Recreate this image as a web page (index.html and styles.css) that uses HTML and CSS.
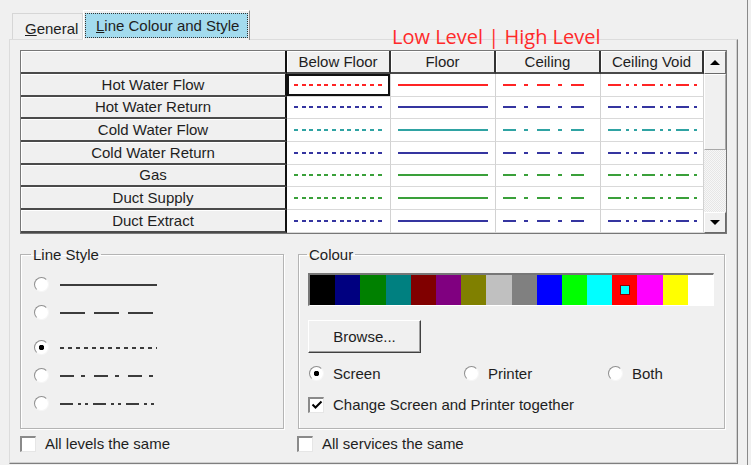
FILE: index.html
```html
<!DOCTYPE html>
<html lang="en">
<head>
    <meta charset="UTF-8">
    <meta name="viewport" content="width=device-width, initial-scale=1.0">
    <title>Line Colour and Style</title>
    <link rel="stylesheet" href="styles.css">
</head>
<body>
    <div class="window">
        <div class="tabs">
            <div class="tab"><u>G</u>eneral</div>
            <div class="tab active"><span class="focus"><u>L</u>ine Colour and Style</span></div>
        </div>

        <div class="panel">
            <div class="grid">
                <div class="hcell corner"></div>
                <div class="hcell">Below Floor</div>
                <div class="hcell">Floor</div>
                <div class="hcell">Ceiling</div>
                <div class="hcell">Ceiling Void</div>

                <div class="row red">
                    <div class="rh">Hot Water Flow</div>
                    <div class="cell sel"><i class="ln dot"></i></div>
                    <div class="cell"><i class="ln solid"></i></div>
                    <div class="cell"><i class="ln dash-dot"></i></div>
                    <div class="cell"><i class="ln dash-dot-dot"></i></div>
                </div>
                <div class="row navy">
                    <div class="rh">Hot Water Return</div>
                    <div class="cell"><i class="ln dot"></i></div>
                    <div class="cell"><i class="ln solid"></i></div>
                    <div class="cell"><i class="ln dash-dot"></i></div>
                    <div class="cell"><i class="ln dash-dot-dot"></i></div>
                </div>
                <div class="row teal">
                    <div class="rh">Cold Water Flow</div>
                    <div class="cell"><i class="ln dot"></i></div>
                    <div class="cell"><i class="ln solid"></i></div>
                    <div class="cell"><i class="ln dash-dot"></i></div>
                    <div class="cell"><i class="ln dash-dot-dot"></i></div>
                </div>
                <div class="row navy">
                    <div class="rh">Cold Water Return</div>
                    <div class="cell"><i class="ln dot"></i></div>
                    <div class="cell"><i class="ln solid"></i></div>
                    <div class="cell"><i class="ln dash-dot"></i></div>
                    <div class="cell"><i class="ln dash-dot-dot"></i></div>
                </div>
                <div class="row green">
                    <div class="rh">Gas</div>
                    <div class="cell"><i class="ln dot"></i></div>
                    <div class="cell"><i class="ln solid"></i></div>
                    <div class="cell"><i class="ln dash-dot"></i></div>
                    <div class="cell"><i class="ln dash-dot-dot"></i></div>
                </div>
                <div class="row green">
                    <div class="rh">Duct Supply</div>
                    <div class="cell"><i class="ln dot"></i></div>
                    <div class="cell"><i class="ln solid"></i></div>
                    <div class="cell"><i class="ln dash-dot"></i></div>
                    <div class="cell"><i class="ln dash-dot-dot"></i></div>
                </div>
                <div class="row navy">
                    <div class="rh">Duct Extract</div>
                    <div class="cell"><i class="ln dot"></i></div>
                    <div class="cell"><i class="ln solid"></i></div>
                    <div class="cell"><i class="ln dash-dot"></i></div>
                    <div class="cell"><i class="ln dash-dot-dot"></i></div>
                </div>

                <div class="scroll">
                    <div class="sbtn"><span class="arrow up"></span></div>
                    <div class="thumb"></div>
                    <div class="track"></div>
                    <div class="sbtn down"><span class="arrow dn"></span></div>
                </div>
            </div>

            <div class="groups">
                <fieldset class="box line-style">
                    <legend>Line Style</legend>
                    <div class="box-body">
                        <div class="opt"><span class="radio"></span><i class="sample s-solid"></i></div>
                        <div class="opt"><span class="radio"></span><i class="sample s-dash"></i></div>
                        <div class="opt spaced"><span class="radio on"></span><i class="sample s-dot"></i></div>
                        <div class="opt"><span class="radio"></span><i class="sample s-dash-dot"></i></div>
                        <div class="opt"><span class="radio"></span><i class="sample s-dash-dot-dot"></i></div>
                    </div>
                </fieldset>

                <fieldset class="box colour">
                    <legend>Colour</legend>
                    <div class="box-body">
                        <div class="palette">
                            <span style="background:#000000"></span>
                            <span style="background:#000080"></span>
                            <span style="background:#008000"></span>
                            <span style="background:#008080"></span>
                            <span style="background:#800000"></span>
                            <span style="background:#800080"></span>
                            <span style="background:#808000"></span>
                            <span style="background:#c0c0c0"></span>
                            <span style="background:#808080"></span>
                            <span style="background:#0000ff"></span>
                            <span style="background:#00ff00"></span>
                            <span style="background:#00ffff"></span>
                            <span style="background:#ff0000"><b class="picked"></b></span>
                            <span style="background:#ff00ff"></span>
                            <span style="background:#ffff00"></span>
                            <span style="background:#ffffff"></span>
                        </div>
                        <button class="btn">Browse...</button>
                        <div class="radios">
                            <label class="choice"><span class="radio on"></span>Screen</label>
                            <label class="choice"><span class="radio"></span>Printer</label>
                            <label class="choice"><span class="radio"></span>Both</label>
                        </div>
                        <label class="choice check-row">
                            <span class="check"><svg width="12" height="12" viewBox="0 0 12 12"><polyline points="1.5,5.5 4.5,8.5 10.5,2.5" fill="none" stroke="#000" stroke-width="2"/></svg></span>
                            Change Screen and Printer together
                        </label>
                    </div>
                </fieldset>
            </div>

            <div class="footer">
                <label class="choice levels"><span class="check"></span>All levels the same</label>
                <label class="choice"><span class="check"></span>All services the same</label>
            </div>
        </div>

        <div class="note">Low Level | High Level</div>
    </div>
</body>
</html>
```

FILE: styles.css
```css
* {
    box-sizing: border-box;
}
body {
    margin: 0;
    background: #f0f0f0;
    font-family: "Liberation Sans", Arial, sans-serif;
    font-size: 15px;
    color: #1e1e1e;
}
.window {
    position: relative;
    width: 748px;
    height: 465px;
    border-right: 1px solid #8a8a8a;
    overflow: hidden;
}

/* tabs */
.tabs {
    display: flex;
    align-items: flex-end;
    height: 39px;
    padding-left: 12px;
}
.tab {
    width: 71px;
    height: 26px;
    padding: 3px 0 0 12px;
    display: flex;
    align-items: center;
    border: 1px solid #d6d6d6;
    border-bottom: none;
}
.tab.active {
    position: relative;
    z-index: 1;
    width: 167px;
    height: 30px;
    margin-bottom: -1px;
    padding: 1px;
    border-color: #fff #8a8a8a #f0f0f0 #fff;
    background: #f0f0f0;
}
.focus {
    display: flex;
    align-items: center;
    width: 100%;
    height: 25px;
    padding-left: 10px;
    background: #a3dbee;
    border: 1px dotted #333;
}

/* panel */
.panel {
    width: 729px;
    height: 425px;
    margin-left: 9px;
    padding: 10px 10px 0 10px;
    border: 1px solid;
    border-color: #dcdcdc #7f7f7f #7f7f7f #dcdcdc;
    box-shadow: inset -1px -1px #cfcfcf;
}

/* grid */
.grid {
    display: grid;
    grid-template-columns: 266px 104px 105px 105px 103px 22px;
    grid-template-rows: 23px repeat(7, 22.67px);
    width: max-content;
    border: 1px solid #777;
}
.row {
    display: contents;
}
.hcell, .rh {
    display: flex;
    align-items: center;
    justify-content: center;
    background: #f0f0f0;
    color: #1e1e1e;
    box-shadow: inset 1px 1px #fff;
    border-bottom: 2px solid #4a4a4a;
    border-right: 2px solid #333;
    white-space: nowrap;
}
.hcell.corner, .rh {
    border-right-color: #111;
}
.cell {
    display: flex;
    align-items: center;
    padding-left: 7px;
    background: #fff;
    border-right: 1px solid #d2d2d2;
    border-bottom: 1px solid #d9d9d9;
}
.cell.sel {
    box-shadow: inset 0 0 0 2px #111;
}
.red { color: #ff2424; }
.navy { color: #3535a0; }
.teal { color: #2fa3a3; }
.green { color: #3aa03a; }

.ln {
    display: block;
    height: 2px;
}
.ln.dot {
    width: 90px;
    background: repeating-linear-gradient(90deg, currentColor 0 4px, transparent 4px 7.6px);
}
.ln.solid {
    width: 90px;
    background: currentColor;
}
.ln.dash-dot {
    width: 81px;
    background: repeating-linear-gradient(90deg, currentColor 0 13px, transparent 13px 21px, currentColor 21px 25px, transparent 25px 34px);
}
.ln.dash-dot-dot {
    width: 89px;
    background: repeating-linear-gradient(90deg, currentColor 0 13px, transparent 13px 18px, currentColor 18px 21px, transparent 21px 26px, currentColor 26px 29px, transparent 29px 34px);
}

/* scrollbar */
.scroll {
    grid-column: 6;
    grid-row: 1 / span 8;
    display: flex;
    flex-direction: column;
}
.sbtn {
    height: 23px;
    display: flex;
    align-items: center;
    justify-content: center;
    background: #f0f0f0;
    border: 1px solid;
    border-color: #fff #6a6a6a #6a6a6a #fff;
}
.sbtn.down {
    height: 21px;
}
.thumb {
    height: 76px;
    background: #f0f0f0;
    border: 1px solid;
    border-color: #fff #a8a8a8 #a8a8a8 #fff;
}
.track {
    flex: 1;
    background: repeating-conic-gradient(#f7f7f7 0 25%, #e6e6e6 0 50%) 0 0 / 2px 2px;
}
.arrow {
    width: 0;
    height: 0;
    border-left: 5px solid transparent;
    border-right: 5px solid transparent;
}
.arrow.up {
    border-bottom: 5px solid #000;
}
.arrow.dn {
    border-top: 5px solid #000;
}

/* group boxes */
.groups {
    display: flex;
    gap: 14px;
    margin-top: 12px;
}
.box {
    margin: 0;
    padding: 0;
    height: 183px;
    border: 1px solid #b4b4b4;
    box-shadow: inset 1px 1px #fff, 1px 1px #fff;
}
.box legend {
    padding: 0 2px;
    line-height: 17px;
}
.line-style {
    width: 264px;
}
.line-style legend {
    margin-left: 10px;
}
.colour {
    width: 427px;
}
.colour legend {
    margin-left: 8px;
}
.line-style .box-body {
    padding: 8px 0 0 13px;
}
.colour .box-body {
    padding: 10px 0 0 9px;
}

.opt {
    display: flex;
    align-items: center;
    gap: 11px;
    height: 28px;
}
.opt.spaced {
    margin-top: 7px;
}
.sample {
    display: block;
    height: 2px;
    width: 97px;
    color: #3c3c3c;
}
.s-solid {
    background: currentColor;
}
.s-dash {
    width: 94px;
    background: repeating-linear-gradient(90deg, currentColor 0 25px, transparent 25px 34px);
}
.s-dot {
    background: repeating-linear-gradient(90deg, currentColor 0 4px, transparent 4px 8px);
}
.s-dash-dot {
    width: 94px;
    background: repeating-linear-gradient(90deg, currentColor 0 14px, transparent 14px 21px, currentColor 21px 25px, transparent 25px 34px);
}
.s-dash-dot-dot {
    width: 95px;
    background: repeating-linear-gradient(90deg, currentColor 0 13px, transparent 13px 18px, currentColor 18px 21px, transparent 21px 25px, currentColor 25px 28px, transparent 28px 33px);
}

.radio {
    flex: none;
    width: 15px;
    height: 15px;
    border-radius: 50%;
    background: #fff;
    border: 1px solid;
    border-color: #8e8e8e #f6f6f6 #f6f6f6 #8e8e8e;
}
.radio.on {
    background: radial-gradient(circle, #000 0 2.5px, #fff 3px);
}

/* colour box */
.palette {
    display: flex;
    width: 406px;
    height: 33px;
    border-style: solid;
    border-width: 2px 1px 1px 2px;
    border-color: #777 #fff #fff #777;
}
.palette span {
    flex: 1;
    display: flex;
    align-items: center;
    justify-content: center;
}
.picked {
    width: 10px;
    height: 10px;
    background: #00ffff;
    border: 1px solid #8a0000;
}
.btn {
    display: block;
    width: 113px;
    height: 33px;
    margin-top: 14px;
    padding: 0;
    font: inherit;
    color: inherit;
    background: #f0f0f0;
    border: 1px solid;
    border-color: #fff #404040 #404040 #fff;
    box-shadow: inset -1px -1px #a0a0a0;
}
.radios {
    display: grid;
    grid-template-columns: 155px 144px auto;
    height: 22px;
    margin-top: 10px;
    padding-left: 1px;
}
.choice {
    display: flex;
    align-items: center;
    gap: 9px;
}
.check-row {
    height: 22px;
    margin-top: 9px;
}
.check {
    flex: none;
    width: 16px;
    height: 16px;
    display: flex;
    align-items: center;
    justify-content: center;
    background: #fff;
    border-style: solid;
    border-width: 2px 1px 1px 2px;
    border-color: #8a8a8a #e6e6e6 #e6e6e6 #8a8a8a;
}

/* footer */
.footer {
    display: flex;
    height: 18px;
    margin-top: 6px;
}
.footer .levels {
    width: 277px;
}

/* annotation over the dialog */
.note {
    position: absolute;
    left: 392px;
    top: 27px;
    font-family: "Open Sans", "Liberation Sans", sans-serif;
    font-size: 20px;
    line-height: 20px;
    color: #ff2a2a;
    white-space: nowrap;
}
```
